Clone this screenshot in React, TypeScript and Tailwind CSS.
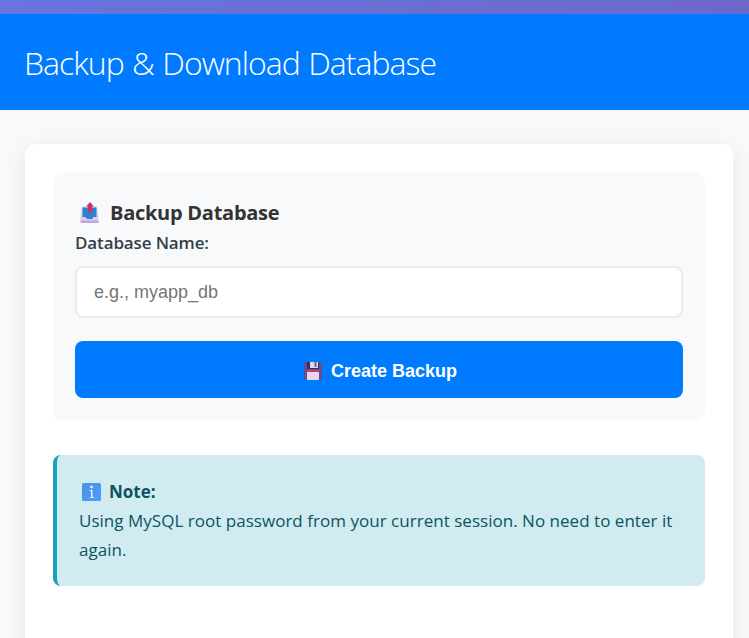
import React, { useState } from "react";

const OutboxIcon = () => (
  <svg className="h-[22px] w-[19px] shrink-0" viewBox="0 0 19 22">
    <path d="M2 4.500h14.500L18.500 15v5a1 1 0 0 1-1 1h-16a1 1 0 0 1-1-1v-5z" fill="#d6d0ec" />
    <path d="M.5 18.500h18V20a1 1 0 0 1-1 1h-16a1 1 0 0 1-1-1z" fill="#bfa9d8" />
    <path d="M2.500 5.500h14V15h-3l-1.500 2H7l-1.500-2h-3z" fill="#2f80d0" />
    <path d="M10 0 14 4.500h-2v6H8v-6H6z" fill="#d0305f" />
  </svg>
);

const FloppyIcon = () => (
  <svg className="h-[18px] w-[18px] shrink-0" viewBox="0 0 18 18">
    <path d="M1 0h16a1 1 0 0 1 1 1v16a1 1 0 0 1-1 1H2l-2-2V1a1 1 0 0 1 1-1z" fill="#5f4f93" />
    <path d="M3 0h12v7H3z" fill="#35305a" />
    <path d="M6 0h8v6H6z" fill="#dcd9ed" />
    <path d="M10.500 0h2v5h-2z" fill="#6a648f" />
    <path d="M3 8h12v2.500H3z" fill="#cf3c62" />
    <path d="M3 10h12v8H3z" fill="#e9d5ee" />
  </svg>
);

const InfoIcon = () => (
  <svg className="h-[18px] w-[19px] shrink-0" viewBox="0 0 19 18">
    <defs>
      <linearGradient id="info" x1="0" y1="0" x2="1" y2="1">
        <stop offset="0" stopColor="#4b91e0" />
        <stop offset="1" stopColor="#4d9cff" />
      </linearGradient>
    </defs>
    <rect width="19" height="18" rx="1.500" fill="url(#info)" />
    <circle cx="9.500" cy="4" r="1.400" fill="#e8f3ff" />
    <path d="M7.700 7h2.800v7H12v1H7.700v-1H9V8H7.700z" fill="#e8f3ff" />
  </svg>
);

const BackupForm = () => {
  const [database, setDatabase] = useState("");

  return (
    <form
      className="rounded-[10px] bg-[#f8f9fa] px-[22px] pt-[26px] pb-[23px]"
      onSubmit={(e) => e.preventDefault()}
    >
      <h2 className="flex h-[30px] items-center pl-[5px] text-[20px] font-bold text-[#333]">
        <OutboxIcon />
        <span className="ml-[11px] whitespace-nowrap tracking-[-0.27px]">Backup Database</span>
      </h2>
      <label
        htmlFor="database"
        className="block h-[29px] text-[17px] leading-[29px] font-semibold tracking-[-0.13px] text-[#333f49]"
      >
        Database Name:
      </label>
      <input
        id="database"
        type="text"
        value={database}
        onChange={(e) => setDatabase(e.target.value)}
        placeholder="e.g., myapp_db"
        className="mt-[9px] block h-[52px] w-full rounded-lg border-2 border-[#e9ecef] bg-white px-[17px] font-['Liberation_Sans',Arial,sans-serif] text-[18px] text-[#333] outline-none placeholder:text-[#757575]"
      />
      <button
        type="submit"
        className="mt-[23px] flex h-[57px] w-full items-center justify-center rounded-lg bg-[#007bff] pt-[3px] pl-[3px] font-['Liberation_Sans',Arial,sans-serif] text-[18px] font-bold text-white"
      >
        <FloppyIcon />
        <span className="ml-[9px] whitespace-nowrap">Create Backup</span>
      </button>
    </form>
  );
};

const Note = () => (
  <div className="mt-[34px] h-[131px] rounded-lg border-l-4 border-[#17a2b8] bg-[#d1ecf1] pt-[22px] pl-[22px] text-[17px] leading-[29px] text-[#0c5460]">
    <div className="flex items-center pl-[3px] font-bold">
      <InfoIcon />
      <span className="ml-2">Note:</span>
    </div>
    <p className="whitespace-nowrap tracking-[0.025px]">
      Using MySQL root password from your current session. No need to enter it
      <br />
      again.
    </p>
  </div>
);

const App = () => {
  return (
    <div className="h-[638px] overflow-hidden bg-[#f8f9fa] font-['Open_Sans','Noto_Sans',sans-serif]">
      <div className="h-3.5 bg-linear-to-r from-[#6775dd] to-[#6c69cb]" />
      <header className="flex h-24 items-center bg-[#007bff] px-6">
        <h1 className="whitespace-nowrap pt-0.5 text-[32px] font-light tracking-[-0.98px] [word-spacing:1px] text-white">
          Backup &amp; Download Database
        </h1>
      </header>
      <main className="mt-[34px] mr-4 ml-[25px] h-[560px] rounded-[10px] bg-white p-7 shadow-[0_5px_25px_rgba(0,0,0,0.08)]">
        <BackupForm />
        <Note />
      </main>
    </div>
  );
};

export default App;
